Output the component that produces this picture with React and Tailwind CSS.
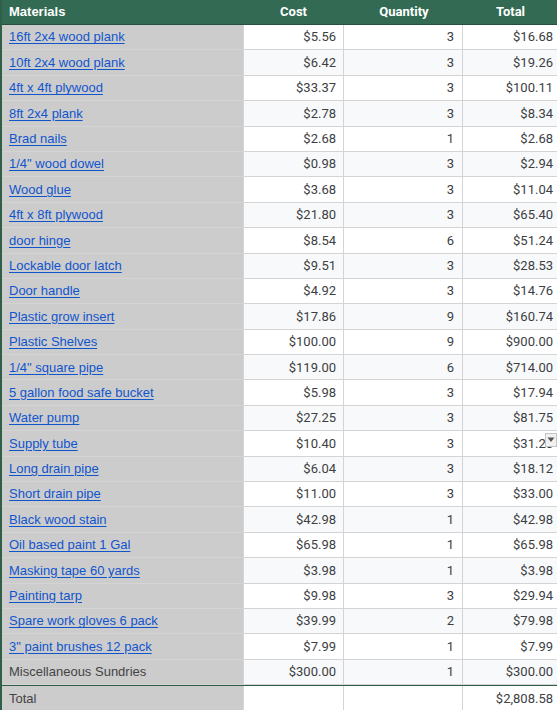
import React from 'react';

const rows = [
  ['16ft 2x4 wood plank', '$5.56', 3, '$16.68'],
  ['10ft 2x4 wood plank', '$6.42', 3, '$19.26'],
  ['4ft x 4ft plywood', '$33.37', 3, '$100.11'],
  ['8ft 2x4 plank', '$2.78', 3, '$8.34'],
  ['Brad nails', '$2.68', 1, '$2.68'],
  ['1/4" wood dowel', '$0.98', 3, '$2.94'],
  ['Wood glue', '$3.68', 3, '$11.04'],
  ['4ft x 8ft plywood', '$21.80', 3, '$65.40'],
  ['door hinge', '$8.54', 6, '$51.24'],
  ['Lockable door latch', '$9.51', 3, '$28.53'],
  ['Door handle', '$4.92', 3, '$14.76'],
  ['Plastic grow insert', '$17.86', 9, '$160.74'],
  ['Plastic Shelves', '$100.00', 9, '$900.00'],
  ['1/4" square pipe', '$119.00', 6, '$714.00'],
  ['5 gallon food safe bucket', '$5.98', 3, '$17.94'],
  ['Water pump', '$27.25', 3, '$81.75'],
  ['Supply tube', '$10.40', 3, '$31.20'],
  ['Long drain pipe', '$6.04', 3, '$18.12'],
  ['Short drain pipe', '$11.00', 3, '$33.00'],
  ['Black wood stain', '$42.98', 1, '$42.98'],
  ['Oil based paint 1 Gal', '$65.98', 1, '$65.98'],
  ['Masking tape 60 yards', '$3.98', 1, '$3.98'],
  ['Painting tarp', '$9.98', 3, '$29.94'],
  ['Spare work gloves 6 pack', '$39.99', 2, '$79.98'],
  ['3" paint brushes 12 pack', '$7.99', 1, '$7.99'],
];

const arial = "font-['Liberation_Sans',Arial,sans-serif]";
const roboto = "font-['Roboto',sans-serif]";

function Row({ name, cost, qty, total, link = true, odd, dropdown }) {
  return (
    <div className={`flex h-[25.4px] border-b border-[#d4d4d4] ${odd ? 'bg-[#f8f9fa]' : 'bg-white'}`}>
      <div className={`flex w-[241px] shrink-0 items-center bg-[#cccccc] pl-[7px] text-[13px] ${arial}`}>
        {link ? (
          <span className="text-[#1155cc] underline underline-offset-[2px]">{name}</span>
        ) : (
          <span className="text-[#444444]">{name}</span>
        )}
      </div>
      <div className={`flex w-[100px] shrink-0 items-center justify-end border-l border-[#d4d4d4] pr-[7px] text-[13px] text-[#3c4043] ${roboto}`}>{cost}</div>
      <div className={`flex w-[119px] shrink-0 items-center justify-end border-l border-[#d4d4d4] pr-[8px] text-[13px] text-[#3c4043] ${roboto}`}>{qty}</div>
      <div className={`relative flex flex-1 items-center justify-end overflow-hidden border-l border-[#d4d4d4] pr-[4px] text-[13px] text-[#3c4043] ${roboto}`}>
        {total}
        {dropdown && (
          <div className="absolute right-0 top-[2px] flex h-[14px] w-[12px] items-start justify-center border border-[#c4c4c4] bg-[#f1f1f1]">
            <svg width="8" height="6" viewBox="0 0 8 6" className="mt-[3px]">
              <path d="M0.5 0.5 L7.5 0.5 L4 5 Z" fill="#555" />
            </svg>
          </div>
        )}
      </div>
    </div>
  );
}

export default function App() {
  return (
    <div className="h-[710px] w-[557px] overflow-hidden border-l-2 border-[#2f5f47] bg-white">
      <div className="flex h-[25px] border-b border-[#274f3c] bg-[#336a53] text-[13px] font-bold text-white">
        <div className={`flex w-[241px] shrink-0 items-center pl-[7px] ${arial}`}>Materials</div>
        <div className={`flex w-[101px] shrink-0 items-center justify-center ${roboto}`}>Cost</div>
        <div className={`flex w-[120px] shrink-0 items-center justify-center ${roboto}`}>Quantity</div>
        <div className={`flex flex-1 items-center justify-center ${roboto}`}>Total</div>
      </div>
      {rows.map((r, i) => (
        <Row key={i} name={r[0]} cost={r[1]} qty={r[2]} total={r[3]} odd={i % 2 === 1} dropdown={r[0] === 'Supply tube'} />
      ))}
      <div className="border-b border-[#2f5f47]">
        <Row name="Miscellaneous Sundries" cost="$300.00" qty={1} total="$300.00" link={false} odd />
      </div>
      <div className="flex h-[25px] bg-white">
        <div className={`flex w-[241px] shrink-0 items-center bg-[#cccccc] pl-[7px] text-[13px] text-[#444444] ${arial}`}>Total</div>
        <div className="w-[100px] shrink-0 border-l border-[#d4d4d4]"></div>
        <div className="w-[119px] shrink-0 border-l border-[#d4d4d4]"></div>
        <div className={`flex flex-1 items-center justify-end border-l border-[#d4d4d4] pr-[4px] text-[13px] text-[#3c4043] ${roboto}`}>$2,808.58</div>
      </div>
    </div>
  );
}
